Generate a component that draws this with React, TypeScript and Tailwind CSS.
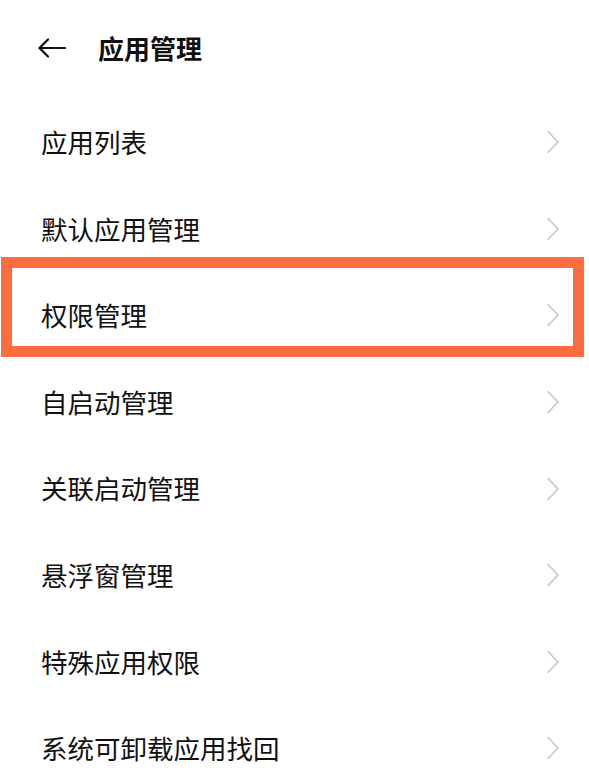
const items = [
  "应用列表",
  "默认应用管理",
  "权限管理",
  "自启动管理",
  "关联启动管理",
  "悬浮窗管理",
  "特殊应用权限",
  "系统可卸载应用找回",
];

function Chevron() {
  return (
    <svg width="14" height="24" viewBox="0 0 14 24" fill="none" className="shrink-0">
      <path d="M2 1.5 L12 12 L2 22.5" stroke="#c6c6c6" strokeWidth="1.6" strokeLinecap="round" strokeLinejoin="round" />
    </svg>
  );
}

export default function App() {
  return (
    <main
      className="min-h-screen w-[589px] overflow-hidden bg-white text-[#111]"
      style={{ fontFamily: '"Noto Sans CJK SC", "Noto Sans", sans-serif' }}
    >
      <header className="flex h-[96px] items-center pl-[38px]">
        <svg width="28" height="20" viewBox="0 0 28 20" fill="none">
          <path d="M27 10 H2 M10 1.5 L1.5 10 L10 18.5" stroke="#111" strokeWidth="2.2" strokeLinecap="round" strokeLinejoin="round" />
        </svg>
        <h1 className="ml-[32px] text-[26px] font-semibold leading-none">应用管理</h1>
      </header>

      <ul className="mt-[3px]">
        {items.map((item, index) => (
          <li
            key={item}
            className="relative flex h-[86.6px] items-center justify-between pl-[41px] pr-[29px]"
          >
            <span className="text-[26.5px] leading-none">{item}</span>
            <Chevron />
            {index === 2 && (
              <div className="pointer-events-none absolute bottom-[1.5px] left-[1px] right-[5px] top-[-15px] border-[11.5px] border-[#ff6c40]" />
            )}
          </li>
        ))}
      </ul>
    </main>
  );
}
